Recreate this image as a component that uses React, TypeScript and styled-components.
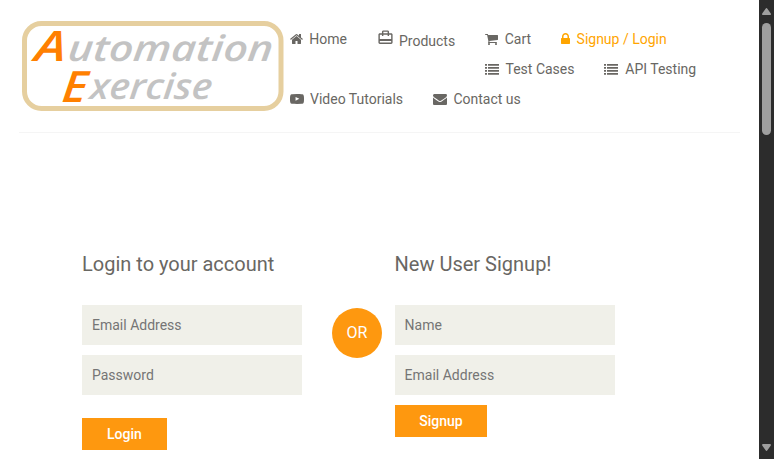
import React from 'react';
import styled, { createGlobalStyle } from 'styled-components';

const GlobalStyle = createGlobalStyle`
  * { box-sizing: border-box; }
  body {
    margin: 0;
    background: #fff;
    color: #696763;
    font-family: Roboto, sans-serif;
    font-size: 14px;
    overflow: hidden;
  }
`;

const Window = styled.div`
  display: flex;
  width: 774px;
  height: 459px;
  overflow: hidden;
`;

const Page = styled.div`
  flex: 1;
  min-width: 0;
  padding: 0 19px;
`;

const Header = styled.header`
  display: flex;
  height: 133px;
  width: 721px;
  border-bottom: 1px solid #f5f5f5;
`;

const Logo = styled.svg`
  flex: none;
  margin: 20px 0 0 2px;
  overflow: visible;
`;

const LogoText = styled.text`
  font-family: 'Open Sans', sans-serif;
  font-style: italic;
  font-weight: 600;
`;

const Nav = styled.nav`
  flex: 1;
  padding: 24px 0 0 6px;
`;

const NavRow = styled.div<{ $indent?: number }>`
  display: flex;
  height: 30px;
  gap: 30px;
  padding-left: ${p => p.$indent ?? 0}px;
`;

const NavLink = styled.a<{ $active?: boolean; $drop?: number }>`
  display: flex;
  align-items: center;
  height: 30px;
  white-space: nowrap;
  line-height: 20px;
  color: ${p => (p.$active ? '#ffa500' : '#696763')};

  span { padding-top: ${p => p.$drop ?? 0}px; }
`;

const Glyph = styled.svg<{ $gap?: number; $lift?: number }>`
  flex: none;
  fill: currentColor;
  margin-right: ${p => p.$gap ?? 6}px;
  margin-bottom: ${p => p.$lift ?? 0}px;
`;

const Forms = styled.main`
  display: flex;
  padding: 118px 0 0 63px;
`;

const Form = styled.form`
  display: flex;
  flex-direction: column;
  align-items: flex-start;
  width: 220px;
`;

const Title = styled.h2`
  margin: 0 0 30px;
  height: 24px;
  font-size: 20px;
  line-height: 26px;
  font-weight: 400;
  white-space: nowrap;
`;

const Field = styled.input`
  width: 220px;
  height: 40px;
  margin: 0 0 10px;
  padding: 0 10px;
  border: 0;
  border-radius: 0;
  background: #f0f0e9;
  color: #696763;
  font: 400 14px Roboto, sans-serif;

  &::placeholder { color: #757575; opacity: 1; }
`;

const Submit = styled.button<{ $top?: number; $pad?: number }>`
  height: 32px;
  margin: ${p => p.$top ?? 0}px 0 0;
  padding: 0 ${p => p.$pad ?? 25}px 1px;
  border: 0;
  background: #fe980f;
  color: #fff;
  font: 500 14px Roboto, sans-serif;
`;

const Or = styled.div`
  width: 50px;
  height: 50px;
  margin: 57px 12.6px 0 30px;
  border-radius: 50%;
  background: #fe980f;
  color: #fff;
  font-size: 16px;
  line-height: 50px;
  text-align: center;
`;

const Scrollbar = styled.div`
  display: flex;
  flex-direction: column;
  align-items: center;
  width: 15px;
  padding: 8px 0;
  background: #2c2c2c;
`;

const Thumb = styled.div`
  width: 9px;
  height: 112px;
  margin: 8px 0 auto;
  border-radius: 5px;
  background: #9f9f9f;
`;

const Arrow = styled.svg`
  flex: none;
  fill: #9f9f9f;
`;

const paths = {
  home: 'M1472 992v480q0 26-19 45t-45 19h-384v-384h-256v384h-384q-26 0-45-19t-19-45v-480q0-1 .5-3t.5-3l575-474 575 474q1 2 1 6zm223-69l-62 74q-8 9-21 11h-3q-13 0-21-7l-692-577-692 577q-12 8-24 7-13-2-21-11l-62-74q-8-10-7-23.5t11-21.5l719-599q32-26 76-26t76 26l244 204v-195q0-14 9-23t23-9h192q14 0 23 9t9 23v408l219 182q10 8 11 21.5t-7 23.5z',
  cart: 'M704 1536q0 52-38 90t-90 38-90-38-38-90 38-90 90-38 90 38 38 90zm896 0q0 52-38 90t-90 38-90-38-38-90 38-90 90-38 90 38 38 90zm128-1088v512q0 24-16.5 42.5t-40.5 21.5l-1044 122q13 60 13 70 0 16-24 64h920q26 0 45 19t19 45-19 45-45 19h-1024q-26 0-45-19t-19-45q0-11 8-31.5t16-36 21.5-40 15.5-29.5l-177-823h-204q-26 0-45-19t-19-45 19-45 45-19h256q16 0 28.5 6.5t19.5 15.5 13 24.5 8 26 5.5 29.5 4.5 26h1201q26 0 45 19t19 45z',
  lock: 'M640 768h512v-192q0-106-75-181t-181-75-181 75-75 181v192zm832 96v576q0 40-28 68t-68 28h-960q-40 0-68-28t-28-68v-576q0-40 28-68t68-28h32v-192q0-184 132-316t316-132 316 132 132 316v192h32q40 0 68 28t28 68z',
  list: 'M0 256h256v208H0zM384 256h1408v208H384zM0 640h256v208H0zM384 640h1408v208H384zM0 1024h256v208H0zM384 1024h1408v208H384zM0 1408h256v208H0zM384 1408h1408v208H384z',
  video: 'M711 1128l484-250-484-253v503zm185-862q168 0 324.5 4.5t229.5 9.5l73 4q1 0 17 1.5t23 3 23.5 4.5 28.5 8 28 13 31 19.5 29 26.5q6 6 15.5 18.5t29 58.5 26.5 101q8 64 12.5 136.5t5.5 113.5v176q1 145-18 290-7 55-25 99.5t-32 61.5l-14 17q-14 15-29 26.5t-31 19-28 12.5-28.5 8-24 4.5-23 3-16.5 1.5q-251 19-627 19-207-2-359.5-6.5t-200.5-7.5l-49-4-36-4q-36-5-54.5-10t-51-21-56.5-41q-6-6-15.5-18.5t-29-58.5-26.5-101q-8-64-12.5-136.5t-5.5-113.5v-176q-1-145 18-290 7-55 25-99.5t32-61.5l14-17q14-15 29-26.5t31-19.5 28-13 28.5-8 23.5-4.5 23-3 17-1.5q251-18 627-18z',
  mail: 'M1792 710v794q0 66-47 113t-113 47h-1472q-66 0-113-47t-47-113v-794q44 49 101 87 362 246 497 345 57 42 92.5 65.5t94.5 48 110 24.5h2q51 0 110-24.5t94.5-48 92.5-65.5q170-123 498-345 57-39 100-87zm0-294q0 79-49 151t-122 123q-376 261-468 325-10 7-42.5 31t-54 38.5-52 32.5-57.5 27-50 9h-2q-23 0-50-9t-57.5-27-52-32.5-54-38.5-42.5-31q-91-64-262-182.5t-205-142.5q-62-42-117-115.5t-55-136.5q0-78 41.5-130t118.5-52h1472q65 0 112.5 47t47.5 113z',
};

type IconProps = { name: keyof typeof paths; x?: number; w?: number; gap?: number };

// Icons share a 1792-unit em; narrow ones trim their side bearings.
function Icon({ name, x = 0, w = 1792, gap }: IconProps) {
  return (
    <Glyph width={(w / 1792) * 14} height={14} viewBox={`${x} 0 ${w} 1792`} $gap={gap}>
      <path d={paths[name]} />
    </Glyph>
  );
}

type WordProps = { x: number; y: number; size: number; width: number; fill: string; children: string };

// Slanted lettering anchored at its baseline origin.
function Word({ x, y, size, width, fill, children }: WordProps) {
  return (
    <LogoText
      transform={`translate(${x} ${y}) skewX(-6)`}
      fontSize={size}
      fill={fill}
      textLength={width}
      lengthAdjust="spacingAndGlyphs"
    >
      {children}
    </LogoText>
  );
}

export default function App() {
  return (
    <>
      <GlobalStyle />
      <Window>
        <Page>
          <Header>
            <Logo width="263" height="92" viewBox="0 0 263 92">
              <rect x="3.5" y="3.5" width="256.5" height="85" rx="17" fill="none" stroke="#e6cf9f" strokeWidth="5" />
              <Word x={13} y={41} size={42} width={31} fill="#ff8000">A</Word>
              <Word x={46} y={41} size={36} width={205} fill="#c3c3c3">utomation</Word>
              <Word x={40} y={82} size={43} width={25} fill="#ff8000">E</Word>
              <Word x={68} y={79} size={36} width={122} fill="#c3c3c3">xercise</Word>
            </Logo>
            <Nav>
              <NavRow>
                <NavLink><Icon name="home" x={64} w={1664} gap={6.3} /><span>Home</span></NavLink>
                <NavLink $drop={4}>
                  <Glyph width="17" height="17" viewBox="0 0 24 24" $gap={5} $lift={3}>
                    <path d="M20 6h-3V4c0-1.11-.89-2-2-2H9c-1.11 0-2 .89-2 2v2H4c-1.11 0-2 .89-2 2v11c0 1.11.89 2 2 2h16c1.11 0 2-.89 2-2V8c0-1.11-.89-2-2-2zM9 4h6v2H9V4zm11 15H4v-2h16v2zm0-5H4V8h3v2h2V8h6v2h2V8h3v6z" />
                  </Glyph>
                  <span>Products</span>
                </NavLink>
                <NavLink><Icon name="cart" x={64} w={1664} gap={6.5} /><span>Cart</span></NavLink>
                <NavLink $active><Icon name="lock" x={320} w={1152} gap={6.5} /><span>Signup / Login</span></NavLink>
              </NavRow>
              <NavRow $indent={195}>
                <NavLink><Icon name="list" gap={6.5} /><span>Test Cases</span></NavLink>
                <NavLink><Icon name="list" gap={6.8} /><span>API Testing</span></NavLink>
              </NavRow>
              <NavRow>
                <NavLink><Icon name="video" /><span>Video Tutorials</span></NavLink>
                <NavLink><Icon name="mail" gap={6.3} /><span>Contact us</span></NavLink>
              </NavRow>
            </Nav>
          </Header>
          <Forms>
            <Form>
              <Title>Login to your account</Title>
              <Field placeholder="Email Address" />
              <Field type="password" placeholder="Password" />
              <Submit type="button" $top={13}>Login</Submit>
            </Form>
            <Or>OR</Or>
            <Form>
              <Title>New User Signup!</Title>
              <Field placeholder="Name" />
              <Field placeholder="Email Address" />
              <Submit type="button" $pad={24.6}>Signup</Submit>
            </Form>
          </Forms>
        </Page>
        <Scrollbar>
          <Arrow width="9" height="7" viewBox="0 0 9 7"><path d="M3.6.7Q4.5-.6 5.4.7L8.8 5.5Q9.2 7 8 7H1Q-.2 7 .2 5.5z" /></Arrow>
          <Thumb />
          <Arrow width="9" height="7" viewBox="0 0 9 7"><path d="M3.6 6.3Q4.5 7.6 5.4 6.3L8.8 1.5Q9.2 0 8 0H1Q-.2 0 .2 1.5z" /></Arrow>
        </Scrollbar>
      </Window>
    </>
  );
}
